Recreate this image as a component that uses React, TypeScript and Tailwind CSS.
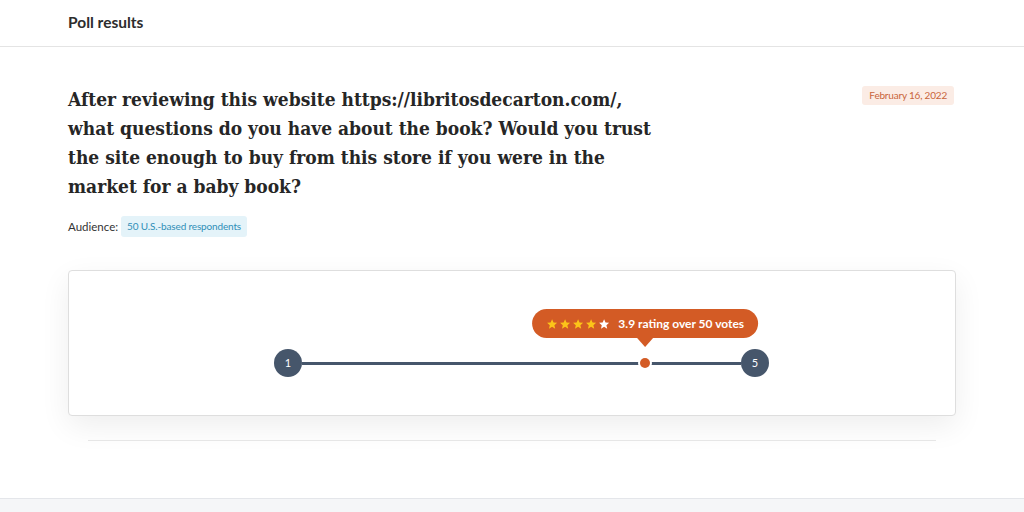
import React from 'react';

const rating = 3.9;

const Star = ({ filled }: { filled: boolean }) => (
  <svg viewBox="0 0 24 24" className="w-[12px] h-[12px]" fill={filled ? '#fcc419' : '#ffffff'}>
    <path d="M12 2.5l2.9 6.6 7.1.6-5.4 4.7 1.6 7-6.2-3.7-6.2 3.7 1.6-7L2 9.7l7.1-.6z" />
  </svg>
);

const App = () => {
  const pct = 75;

  return (
    <div className="min-h-screen bg-white flex flex-col font-['Lato',sans-serif] text-[#2b2b2b]">
      {/* Header */}
      <header className="h-[47px] border-b border-[#e4e4e4] flex items-center px-[68px]">
        <h1 className="text-[15.5px] font-bold text-[#2d2d2d]">Poll results</h1>
      </header>

      <main className="px-[68px] pt-[38px] flex-1">
        {/* Question */}
        <div className="flex justify-between items-start">
          <h2 className="max-w-[600px] font-['DejaVu_Serif_Condensed','DejaVu_Serif',serif] text-[19px] leading-[29px] font-bold text-[#262626]">
            After reviewing this website https://libritosdecarton.com/, what questions do you have about the book? Would you trust the site enough to buy from this store if you were in the market for a baby book?
          </h2>
          <span className="mt-[1px] mr-[2px] bg-[#fbece5] text-[#c9643a] text-[10px] tracking-[-0.2px] px-[7px] py-[2px] rounded-[3px]">
            February 16, 2022
          </span>
        </div>

        <div className="mt-[15px] flex items-center gap-[3px] text-[11.5px] text-[#333]">
          <span>Audience:</span>
          <span className="bg-[#e4f3f9] text-[#2f8fb8] text-[10px] tracking-[-0.15px] px-[6px] py-[3px] rounded-[3px]">
            50 U.S.-based respondents
          </span>
        </div>

        {/* Result card */}
        <div className="mt-[33px] h-[146px] border border-[#dedede] rounded-[4px] bg-white shadow-[0_10px_30px_rgba(0,0,0,0.07)]">
          <div className="relative ml-[205px] mt-[78px] w-[495px] h-[28px] flex items-center">
            <div className="w-[28px] h-[28px] rounded-full bg-[#46566b] text-white text-[11px] flex items-center justify-center shrink-0">1</div>
            <div className="flex-1 h-[3px] bg-[#46566b]" />
            <div className="w-[28px] h-[28px] rounded-full bg-[#46566b] text-white text-[11px] flex items-center justify-center shrink-0">5</div>

            {/* dot */}
            <div
              className="absolute top-1/2 -translate-x-1/2 -translate-y-1/2 w-[14px] h-[14px] rounded-full bg-white flex items-center justify-center"
              style={{ left: `${pct}%` }}
            >
              <div className="w-[10px] h-[10px] rounded-full bg-[#d35b25]" />
            </div>

            {/* tooltip */}
            <div
              className="absolute bottom-[30px] -translate-x-1/2 flex flex-col items-center"
              style={{ left: `${pct}%` }}
            >
              <div className="h-[29px] px-[14px] rounded-[15px] bg-[#d35b25] text-white flex items-center gap-[8px] whitespace-nowrap">
                <div className="flex gap-[1px]">
                  {[1, 2, 3, 4, 5].map((i) => (
                    <Star key={i} filled={i <= Math.round(rating)} />
                  ))}
                </div>
                <span className="text-[12px] font-bold">{rating} rating over 50 votes</span>
              </div>
              <div className="w-0 h-0 border-l-[8px] border-r-[8px] border-t-[9px] border-l-transparent border-r-transparent border-t-[#d35b25]" />
            </div>
          </div>
        </div>

        <div className="mx-[20px] mt-[24px] border-t border-[#e6e6e6]" />
      </main>

      <footer className="h-[14px] bg-[#f5f6f8] border-t border-[#e4e6ea]" />
    </div>
  );
};

export default App;
